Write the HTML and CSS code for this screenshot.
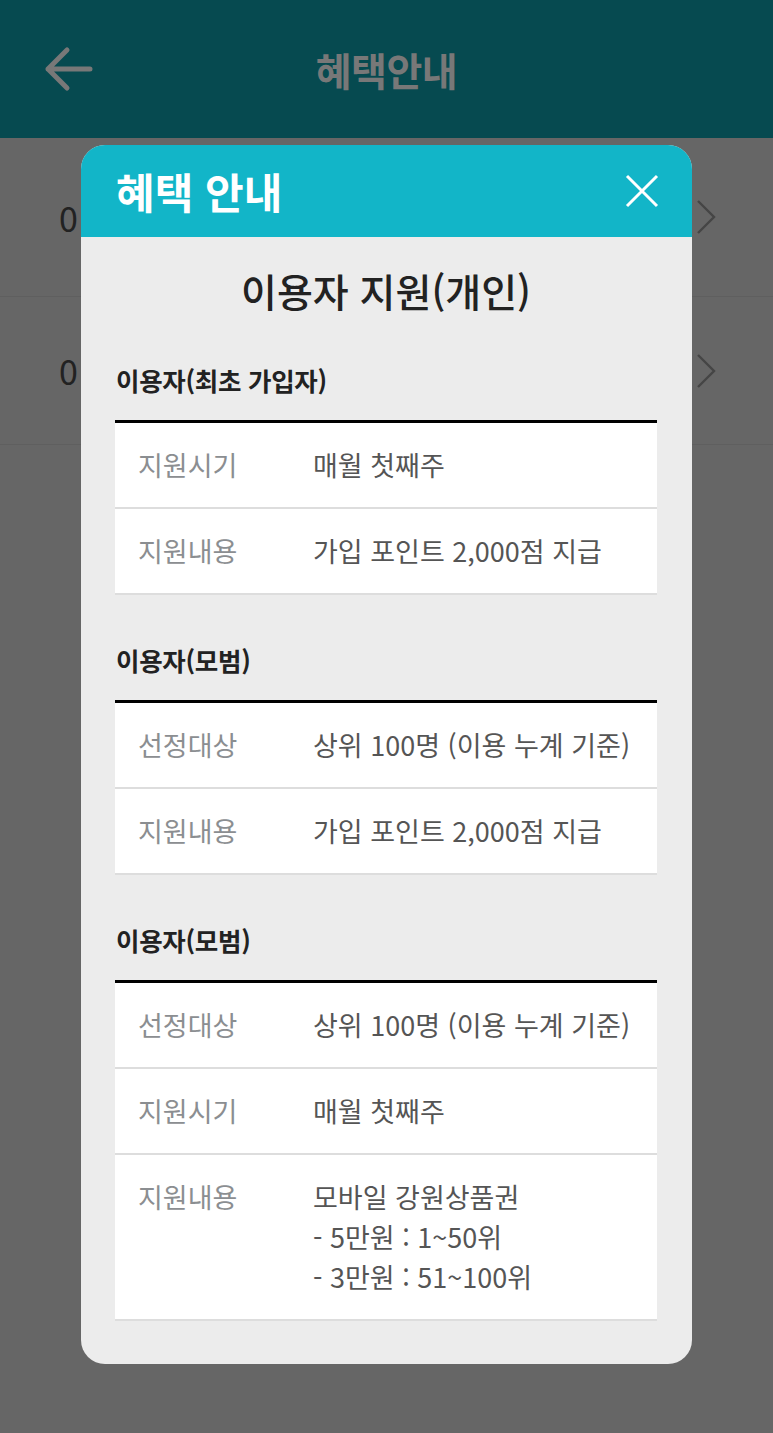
FILE: index.html
```html
<!DOCTYPE html>
<html lang="ko">
<head>
<meta charset="utf-8">
<title>혜택안내</title>
<link rel="stylesheet" href="styles.css">
</head>
<body>
<div class="page">
  <header class="topbar">
    <div class="back">
      <svg width="50" height="46" viewBox="0 0 50 46"><path d="M46 23H4M23 4L4 23L23 42" fill="none" stroke="#787878" stroke-width="5" stroke-linecap="round" stroke-linejoin="round"/></svg>
    </div>
    <h1 class="topbar-title">혜택안내</h1>
    <div></div>
  </header>
  <ul class="list">
    <li class="list-row first"><span class="num">0</span><svg class="chev" width="20" height="36" viewBox="0 0 20 36"><path d="M2 2L18 18L2 34" fill="none" stroke="#454545" stroke-width="2.4"/></svg></li>
    <li class="list-row"><span class="num">0</span><svg class="chev" width="20" height="36" viewBox="0 0 20 36"><path d="M2 2L18 18L2 34" fill="none" stroke="#454545" stroke-width="2.4"/></svg></li>
  </ul>

  <div class="modal">
    <div class="modal-head">
      <h2 class="modal-title">혜택 안내</h2>
      <svg class="close" width="34" height="34" viewBox="0 0 34 34"><path d="M2 2L32 32M32 2L2 32" fill="none" stroke="#fff" stroke-width="3"/></svg>
    </div>
    <div class="modal-body">
      <h3 class="main-title">이용자 지원(개인)</h3>

      <h4 class="sec-title">이용자(최초 가입자)</h4>
      <div class="table">
        <div class="trow"><span class="label">지원시기</span><span class="value">매월 첫째주</span></div>
        <div class="trow"><span class="label">지원내용</span><span class="value">가입 포인트 2,000점 지급</span></div>
      </div>

      <h4 class="sec-title">이용자(모범)</h4>
      <div class="table">
        <div class="trow"><span class="label">선정대상</span><span class="value">상위 100명 (이용 누계 기준)</span></div>
        <div class="trow"><span class="label">지원내용</span><span class="value">가입 포인트 2,000점 지급</span></div>
      </div>

      <h4 class="sec-title">이용자(모범)</h4>
      <div class="table">
        <div class="trow"><span class="label">선정대상</span><span class="value">상위 100명 (이용 누계 기준)</span></div>
        <div class="trow"><span class="label">지원시기</span><span class="value">매월 첫째주</span></div>
        <div class="trow"><span class="label">지원내용</span><span class="value">모바일 강원상품권<br>- 5만원 : 1~50위<br>- 3만원 : 51~100위</span></div>
      </div>
    </div>
  </div>
</div>
</body>
</html>
```

FILE: styles.css
```css
* { box-sizing: border-box; }
html, body { margin: 0; padding: 0; }
body {
  width: 773px;
  height: 1433px;
  background: #666666;
  font-family: "Noto Sans CJK KR", "Noto Sans", sans-serif;
  overflow: hidden;
}
.page { position: relative; width: 773px; height: 1433px; }

.topbar {
  height: 138px;
  background: #064a50;
  display: grid;
  grid-template-columns: 1fr auto 1fr;
  align-items: center;
}
.back { padding-left: 44px; display: flex; align-items: center; }
.topbar-title {
  margin: 0;
  font-size: 39px;
  font-weight: 700;
  color: #787878;
  letter-spacing: -0.5px;
}

.list { list-style: none; margin: 0; padding: 0; }
.list-row {
  height: 148px;
  border-bottom: 1px solid #5f5f5f;
  display: flex;
  align-items: center;
  justify-content: space-between;
  padding: 0 57px 0 59px;
}
.list-row.first { height: 159px; }
.num { font-size: 34px; color: #222; }
.chev { display: block; }

.modal {
  position: absolute;
  top: 145px;
  left: 81px;
  width: 611px;
  background: #ececec;
  border-radius: 24px;
  overflow: hidden;
}
.modal-head {
  height: 92px;
  background: #12b5c8;
  display: flex;
  align-items: center;
  justify-content: space-between;
  padding: 0 33px 0 35px;
}
.modal-title {
  margin: 0;
  font-size: 42px;
  font-weight: 700;
  color: #fff;
  line-height: 1;
}
.close { display: block; }

.modal-body { padding: 28px 35px 43px 34px; }
.main-title {
  margin: 0;
  font-size: 39px;
  font-weight: 500;
  line-height: 50px;
  color: #222;
  text-align: center;
}
.sec-title {
  margin: 48px 0 23px 1px;
  font-size: 25.5px;
  font-weight: 700;
  line-height: 34px;
  color: #222;
  letter-spacing: -0.3px;
}
.table {
  border-top: 3px solid #000;
  background: #fff;
}
.trow {
  display: grid;
  grid-template-columns: 175px 1fr;
  padding: 22px 0 22px 23px;
  line-height: 40px;
  font-size: 27px;
  border-bottom: 2px solid #dddddd;
}
.label { color: #8b8e91; }
.value { color: #555555; }
```
